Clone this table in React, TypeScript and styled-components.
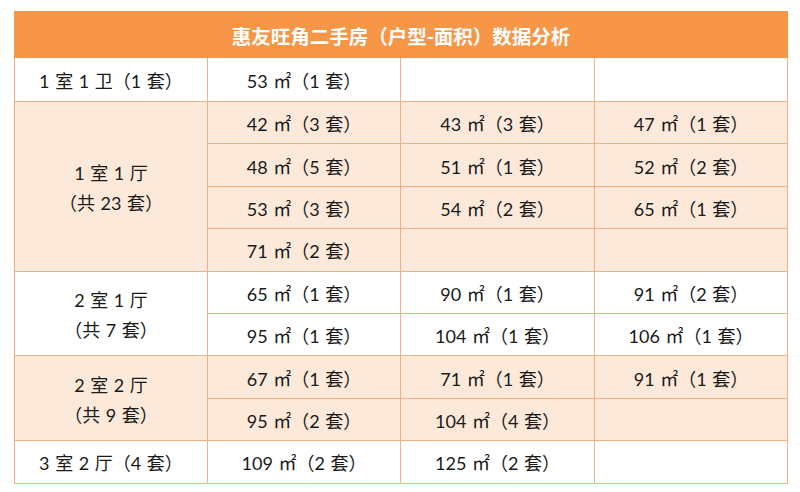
import React from "react";
import styled, { createGlobalStyle } from "styled-components";

const GlobalStyle = createGlobalStyle`
  body {
    margin: 0;
    background: #ffffff;
    font-family: Lato, "Noto Sans CJK SC", sans-serif;
  }
`;

const Page = styled.div`
  width: 800px;
  height: 492px;
  padding: 11px 0 0 14px;
  box-sizing: border-box;
`;

const Table = styled.div`
  display: grid;
  grid-template-columns: 193px 193px 194px 193px;
  grid-template-rows: 47px 44px repeat(9, 42.4px);
  width: 773px;
  border-left: 1px solid #f4b084;
  box-sizing: border-box;
`;

const Title = styled.div`
  grid-column: 1 / span 4;
  background: #f79646;
  color: #ffffff;
  font-family: "Noto Sans CJK SC", sans-serif;
  font-weight: 700;
  font-size: 19.5px;
  display: flex;
  align-items: center;
  justify-content: center;
  margin-left: -1px;
  padding-top: 1px;
`;

const Cell = styled.div<{ $shade?: boolean; $span?: number }>`
  grid-row: span ${(p) => p.$span ?? 1};
  background: ${(p) => (p.$shade ? "#fde9d9" : "#ffffff")};
  border-right: 1px solid #f4b084;
  border-bottom: 1px solid #f4b084;
  display: flex;
  flex-direction: column;
  align-items: center;
  justify-content: center;
  padding-top: 3px;
  font-size: 18px;
  word-spacing: 1px;
  color: #1a1a1a;
  line-height: 30px;
  white-space: pre;
`;

type Group = {
  label: string[];
  cells: string[];
};

const groups: Group[] = [
  { label: ["1 室 1 卫（1 套）"], cells: ["53 ㎡（1 套）", "", ""] },
  {
    label: ["1 室 1 厅", "（共 23 套）"],
    cells: [
      "42 ㎡（3 套）", "43 ㎡（3 套）", "47 ㎡（1 套）",
      "48 ㎡（5 套）", "51 ㎡（1 套）", "52 ㎡（2 套）",
      "53 ㎡（3 套）", "54 ㎡（2 套）", "65 ㎡（1 套）",
      "71 ㎡（2 套）", "", "",
    ],
  },
  {
    label: ["2 室 1 厅", "（共 7 套）"],
    cells: [
      "65 ㎡（1 套）", "90 ㎡（1 套）", "91 ㎡（2 套）",
      "95 ㎡（1 套）", "104 ㎡（1 套）", "106 ㎡（1 套）",
    ],
  },
  {
    label: ["2 室 2 厅", "（共 9 套）"],
    cells: [
      "67 ㎡（1 套）", "71 ㎡（1 套）", "91 ㎡（1 套）",
      "95 ㎡（2 套）", "104 ㎡（4 套）", "",
    ],
  },
  { label: ["3 室 2 厅（4 套）"], cells: ["109 ㎡（2 套）", "125 ㎡（2 套）", ""] },
];

const App = () => (
  <Page>
    <GlobalStyle />
    <Table>
      <Title>惠友旺角二手房（户型-面积）数据分析</Title>
      {groups.map((g, gi) => {
        const shade = gi % 2 === 1;
        return (
          <React.Fragment key={gi}>
            <Cell $shade={shade} $span={g.cells.length / 3}>
              {g.label.map((l) => (
                <span key={l}>{l}</span>
              ))}
            </Cell>
            {g.cells.map((c, ci) => (
              <Cell key={ci} $shade={shade}>
                {c}
              </Cell>
            ))}
          </React.Fragment>
        );
      })}
    </Table>
  </Page>
);

export default App;
